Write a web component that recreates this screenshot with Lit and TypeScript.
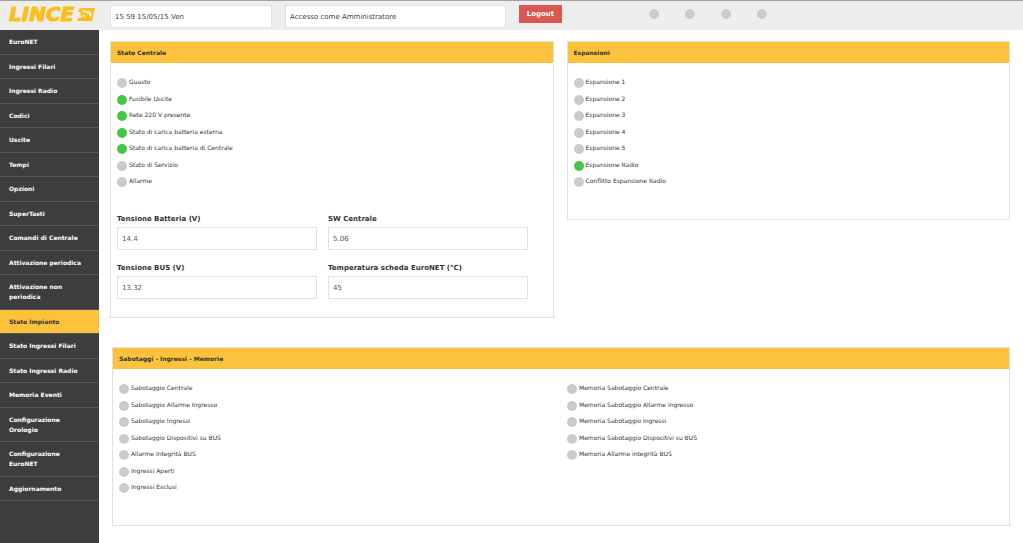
import { LitElement, html, css } from "lit";
import { customElement, property } from "lit/decorators.js";

type Lamp = [label: string, on?: boolean];

const MENU = [
  "EuroNET", "Ingressi Filari", "Ingressi Radio", "Codici", "Uscite", "Tempi",
  "Opzioni", "SuperTasti", "Comandi di Centrale", "Attivazione periodica",
  "Attivazione non periodica", "Stato Impianto", "Stato Ingressi Filari",
  "Stato Ingressi Radio", "Memoria Eventi", "Configurazione Orologio",
  "Configurazione EuroNET", "Aggiornamento",
];
const ACTIVE = "Stato Impianto";

const CENTRALE: Lamp[] = [
  ["Guasto"], ["Fusibile Uscite", true], ["Rete 220 V presente", true],
  ["Stato di carica batteria esterna", true],
  ["Stato di carica batteria di Centrale", true],
  ["Stato di Servizio"], ["Allarme"],
];
const ESPANSIONI: Lamp[] = [
  ["Espansione 1"], ["Espansione 2"], ["Espansione 3"], ["Espansione 4"],
  ["Espansione 5"], ["Espansione Radio", true], ["Conflitto Espansione Radio"],
];
const SABOTAGGI: Lamp[] = [
  ["Sabotaggio Centrale"], ["Sabotaggio Allarme Ingresso"],
  ["Sabotaggio Ingressi"], ["Sabotaggio Dispositivi su BUS"],
  ["Allarme Integrità BUS"], ["Ingressi Aperti"], ["Ingressi Esclusi"],
];
const MEMORIE: Lamp[] = [
  ["Memoria Sabotaggio Centrale"], ["Memoria Sabotaggio Allarme Ingresso"],
  ["Memoria Sabotaggio Ingressi"], ["Memoria Sabotaggio Dispositivi su BUS"],
  ["Memoria Allarme integrità BUS"],
];
const READINGS = [
  { id: "vbat", label: "Tensione Batteria (V)", value: "14.4" },
  { id: "sw", label: "SW Centrale", value: "5.06" },
  { id: "vbus", label: "Tensione BUS (V)", value: "13.32" },
  { id: "temp", label: "Temperatura scheda EuroNET (°C)", value: "45" },
];

@customElement("lamp-list")
export class LampList extends LitElement {
  @property({ attribute: false }) lamps: Lamp[] = [];

  static styles = css`
    :host { display: block; }
    .list { list-style: none; margin: 0; padding: 0; }
    .item { display: flex; gap: 2px; align-items: flex-end; height: 10px; margin-bottom: 7px; }
    .item:nth-child(even) { margin-bottom: 6px; }
    .lamp { flex: none; width: 10px; height: 10px; border-radius: 50%; background: #cbcbcb; }
    .on { background: #44c744; }
    .name { font-size: 6px; line-height: 10px; color: #333; padding-bottom: 1px; }
  `;

  render() {
    return html`<ul class="list">
      ${this.lamps.map(([label, on]) => html`<li class="item">
        <span class="lamp ${on ? "on" : ""}"></span><span class="name">${label}</span>
      </li>`)}
    </ul>`;
  }
}

@customElement("app-root")
export class AppRoot extends LitElement {
  static styles = css`
    :host {
      display: flex;
      flex-direction: column;
      min-height: 100vh;
      background: #fff;
      font-family: Verdana, "DejaVu Sans", sans-serif;
      color: #333;
    }
    * { box-sizing: border-box; }
    .top {
      display: flex;
      align-items: flex-start;
      height: 30px;
      padding: 4px 8px 0;
      border-top: 1px solid #a5a2a5;
      background: #eee;
    }
    .logo { display: block; flex: none; width: 88px; height: 22px; margin-right: 14px; overflow: visible; }
    .box {
      height: 23px;
      padding: 0 4px;
      border: 1px solid #e0e0e0;
      background: #fff;
      color: #444;
      font: 7px/20px Verdana, "DejaVu Sans", sans-serif;
      border-radius: 0;
      outline: none;
    }
    .clock { width: 162px; margin-right: 13px; }
    .user { width: 221px; margin-right: 13px; }
    .logout {
      width: 43px;
      height: 18px;
      padding: 0;
      border: 1px solid #d9574e;
      background: #d9574e;
      color: #fff;
      font: bold 7px/16px Verdana, "DejaVu Sans", sans-serif;
    }
    .leds { display: flex; gap: 26px; margin: 4px 0 0 87px; }
    .led { width: 10px; height: 10px; border-radius: 50%; background: #cbcbcb; }
    .body { flex: 1; display: flex; }
    .menu { flex: none; width: 99px; background: #3d3d3d; }
    .link {
      display: block;
      padding: 7px 9px;
      border-bottom: 1px solid #555;
      color: #fff;
      font-size: 6px;
      font-weight: bold;
      line-height: 10px;
      text-decoration: none;
    }
    .link:nth-child(even) { padding-bottom: 6px; }
    .active { background: #fdc23b; color: #333; }
    .main { flex: 1; padding: 11px 13px 17px 11px; }
    .row { display: grid; grid-template-columns: 1fr 1fr; gap: 13px; align-items: start; }
    .panel { border: 1px solid #e0e0e0; }
    .title {
      margin: 0;
      padding: 0 6px;
      background: #fdc23b;
      font-size: 6px;
      font-weight: bold;
      line-height: 21px;
      color: #333;
    }
    .content { padding: 15px 6px 0; }
    .content.centrale { padding-bottom: 18px; }
    .content.espansioni { padding-bottom: 25px; }
    .content.sabotaggi {
      display: grid;
      grid-template-columns: 1fr 1fr;
      column-gap: 12px;
      padding-bottom: 25px;
    }
    .wide { margin: 29px 0 0 2px; }
    .readings {
      display: grid;
      grid-template-columns: 200px 200px;
      gap: 13px 11px;
      margin-top: 27px;
    }
    .reading { display: flex; flex-direction: column; }
    .label { font-size: 7px; font-weight: bold; line-height: 10px; margin-bottom: 3px; }
    .reading .box { width: 100%; color: #555; }
  `;

  render() {
    return html`
      <header class="top">
        <svg class="logo" viewBox="0 0 88 22" role="img" aria-label="LINCE">
          <text x="1" y="16" font-family="DejaVu Sans, sans-serif" font-size="20" font-weight="bold" font-style="italic" fill="#fdbf17" stroke="#fdbf17" stroke-width="1">LINCE</text>
          <path d="M72 3H87L84 16H69L70 13L75 12L72 10L73 7L70 7Z" fill="#fdbf17" />
          <path d="M74 5L82 6L84 10L82 12L81 9L78 8L75 7Z" fill="#eee" />
          <path d="M74 9L77 10L78 13L75 12Z" fill="#f6dc8c" />
        </svg>
        <input class="box clock" aria-label="Data e ora" readonly .value=${"15 59 15/05/15 Ven"} />
        <input class="box user" aria-label="Utente" readonly .value=${"Accesso come Amministratore"} />
        <button class="logout">Logout</button>
        <div class="leds">${[0, 1, 2, 3].map(() => html`<span class="led"></span>`)}</div>
      </header>
      <div class="body">
        <nav class="menu">
          ${MENU.map((m) => html`<a class="link ${m === ACTIVE ? "active" : ""}" href="#">${m}</a>`)}
        </nav>
        <main class="main">
          <div class="row">
            <section class="panel">
              <h2 class="title">Stato Centrale</h2>
              <div class="content centrale">
                <lamp-list .lamps=${CENTRALE}></lamp-list>
                <div class="readings">
                  ${READINGS.map((r) => html`<div class="reading">
                    <label class="label" for=${r.id}>${r.label}</label>
                    <input class="box" id=${r.id} readonly .value=${r.value} />
                  </div>`)}
                </div>
              </div>
            </section>
            <section class="panel">
              <h2 class="title">Espansioni</h2>
              <div class="content espansioni"><lamp-list .lamps=${ESPANSIONI}></lamp-list></div>
            </section>
          </div>
          <section class="panel wide">
            <h2 class="title">Sabotaggi - Ingressi - Memorie</h2>
            <div class="content sabotaggi">
              <lamp-list .lamps=${SABOTAGGI}></lamp-list>
              <lamp-list .lamps=${MEMORIE}></lamp-list>
            </div>
          </section>
        </main>
      </div>
    `;
  }
}
